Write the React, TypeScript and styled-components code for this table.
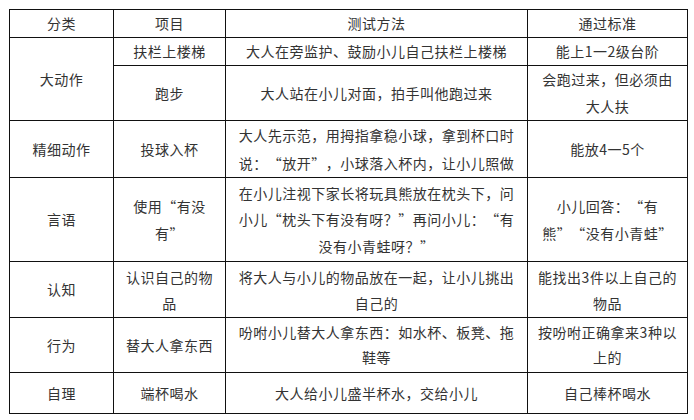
import React from "react";
import styled, { createGlobalStyle } from "styled-components";

const Global = createGlobalStyle`
  html, body { margin: 0; padding: 0; background: #fff; }
  body { font-family: "Noto Sans CJK SC", "Noto Sans", sans-serif; }
`;

const Page = styled.div`
  padding: 9px 0 0 9px;
`;

const Table = styled.table`
  border-collapse: collapse;
  table-layout: fixed;
  width: 678px;
  color: #333;
  font-size: 14px;
  letter-spacing: 0.5px;
  text-spacing-trim: space-all;
  font-feature-settings: "fwid" 0;
`;

const Row = styled.tr<{ $h: number }>`
  height: ${(p) => p.$h}px;
`;

const Cell = styled.td<{ $lh?: number }>`
  border: 1px solid #111;
  padding: 0 4px;
  text-align: center;
  vertical-align: middle;
  white-space: nowrap;
  line-height: ${(p) => p.$lh ?? 27}px;
`;

const Head = styled(Cell).attrs({ as: "th" })`
  font-weight: normal;
`;

type R = { cat?: string; catSpan?: number; item: React.ReactNode; method: React.ReactNode; pass: React.ReactNode; h: number; lh?: number };

const rows: R[] = [
  { cat: "大动作", catSpan: 2, item: "扶栏上楼梯", method: "大人在旁监护、鼓励小儿自己扶栏上楼梯", pass: "能上1一2级台阶", h: 28 },
  { item: "跑步", method: "大人站在小儿对面，拍手叫他跑过来", pass: <>会跑过来，但必须由<br />大人扶</>, h: 54 },
  { cat: "精细动作", item: "投球入杯", method: <>大人先示范，用拇指拿稳小球，拿到杯口时<br />说：“放开”，小球落入杯内，让小儿照做</>, pass: "能放4一5个", h: 56, lh: 28 },
  { cat: "言语", item: <>使用“有没<br />有”</>, method: <>在小儿注视下家长将玩具熊放在枕头下，问<br />小儿“枕头下有没有呀？”再问小儿：“有<br />没有小青蛙呀？”</>, pass: <>小儿回答：“有<br />熊”“没有小青蛙”</>, h: 84, lh: 26.5 },
  { cat: "认知", item: <>认识自己的物<br />品</>, method: <>将大人与小儿的物品放在一起，让小儿挑出<br />自己的</>, pass: <>能找出3件以上自己的<br />物品</>, h: 56, lh: 26 },
  { cat: "行为", item: "替大人拿东西", method: <>吩咐小儿替大人拿东西：如水杯、板凳、拖<br />鞋等</>, pass: <>按吩咐正确拿来3种以<br />上的</>, h: 55, lh: 25 },
  { cat: "自理", item: "端杯喝水", method: "大人给小儿盛半杯水，交给小儿", pass: "自己棒杯喝水", h: 41 },
];

export default function App() {
  return (
    <Page lang="zh-CN">
      <Global />
      <Table>
        <colgroup>
          <col style={{ width: 104 }} />
          <col style={{ width: 112 }} />
          <col style={{ width: 302 }} />
          <col style={{ width: 160 }} />
        </colgroup>
        <thead>
          <Row $h={28}>
            <Head>分类</Head>
            <Head>项目</Head>
            <Head>测试方法</Head>
            <Head>通过标准</Head>
          </Row>
        </thead>
        <tbody>
          {rows.map((r, i) => (
            <Row key={i} $h={r.h}>
              {r.cat && <Cell rowSpan={r.catSpan ?? 1}>{r.cat}</Cell>}
              <Cell $lh={r.lh}>{r.item}</Cell>
              <Cell $lh={r.lh}>{r.method}</Cell>
              <Cell $lh={r.lh}>{r.pass}</Cell>
            </Row>
          ))}
        </tbody>
      </Table>
    </Page>
  );
}
